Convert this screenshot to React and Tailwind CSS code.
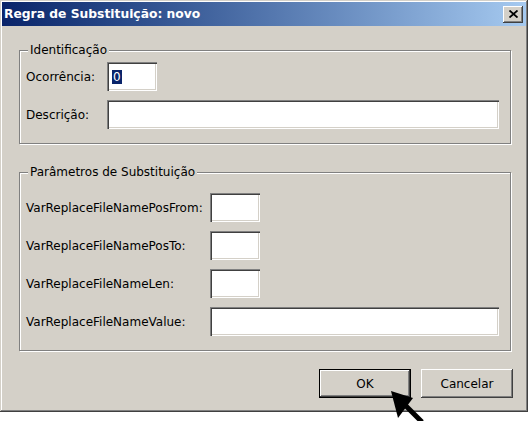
import React from "react";

// Sunken (3D) edit box, Windows classic look
function Field({ width, children }) {
  return (
    <div
      className={`${width} h-[29px] bg-white flex items-center pl-[5px] shadow-[inset_1px_1px_0_#808080,inset_2px_2px_0_#404040,inset_-1px_-1px_0_#ffffff,inset_-2px_-2px_0_#d4d0c8]`}>
      {children}
    </div>
  );
}

function Row({ label, labelWidth, width, children }) {
  return (
    <div className="flex items-center">
      <span className={`${labelWidth} shrink-0`}>{label}</span>
      <Field width={width}>{children}</Field>
    </div>
  );
}

// Etched group box with its caption over the top line
function GroupBox({ title, className, children }) {
  return (
    <div
      className={`relative w-[492px] border border-[#808080] shadow-[inset_1px_1px_0_#ffffff,1px_1px_0_#ffffff] ${className}`}>
      <span className="absolute left-[8px] -top-[8px] px-[2px] bg-[#d4d0c8] leading-[14px]">
        {title}
      </span>
      {children}
    </div>
  );
}

function RaisedButton({ label, isDefault }) {
  const face = (
    <div className="w-full h-full flex items-center justify-center shadow-[inset_-1px_-1px_0_#404040,inset_1px_1px_0_#ffffff,inset_-2px_-2px_0_#808080,inset_2px_2px_0_#d4d0c8]">
      {label}
    </div>
  );
  if (isDefault) {
    return <div className="w-[92px] h-[29px] border border-black">{face}</div>;
  }
  return <div className="w-[92px] h-[29px]">{face}</div>;
}

export default function App() {
  return (
    <div className="relative w-[531px] h-[421px] bg-white font-['DejaVu_Sans',sans-serif] text-[12px] text-black overflow-hidden">
      <div className="w-[528px] h-[412px] bg-[#d4d0c8] p-[2px] flex flex-col shadow-[inset_-1px_-1px_0_#404040,inset_1px_1px_0_#d4d0c8,inset_-2px_-2px_0_#808080,inset_2px_2px_0_#ffffff]">
        {/* Title bar */}
        <div className="h-[24px] flex items-center justify-between pl-[2px] pr-[3px] bg-gradient-to-r from-[#0a246a] to-[#a6caf0]">
          <span className="text-white font-bold text-[12.3px]">
            Regra de Substituição: novo
          </span>
          <div className="w-[20px] h-[17px] flex items-center justify-center shadow-[inset_-1px_-1px_0_#404040,inset_1px_1px_0_#ffffff,inset_-2px_-2px_0_#808080,inset_2px_2px_0_#d4d0c8] bg-[#d4d0c8]">
            <svg width="9" height="8" viewBox="0 0 9 8">
              <path d="M0.5 0.5 L8.5 7.5 M8.5 0.5 L0.5 7.5" stroke="#000" strokeWidth="1.8" />
            </svg>
          </div>
        </div>

        <div className="flex flex-col pl-[17px]">
          <GroupBox title="Identificação" className="mt-[24px] pt-[11px] pb-[14px] pl-[6px] pr-[11px] flex flex-col gap-[9px]">
            <Row label="Ocorrência:" labelWidth="w-[81px]" width="w-[50px]">
              <span className="bg-[#0a246a] text-white px-[1px] leading-[14px]">0</span>
            </Row>
            <Row label="Descrição:" labelWidth="w-[81px]" width="w-[393px]" />
          </GroupBox>

          <GroupBox title="Parâmetros de Substituição" className="mt-[28px] pt-[20px] pb-[14px] pl-[6px] pr-[11px] flex flex-col gap-[9px]">
            <Row label="VarReplaceFileNamePosFrom:" labelWidth="w-[184px]" width="w-[50px]" />
            <Row label="VarReplaceFileNamePosTo:" labelWidth="w-[184px]" width="w-[50px]" />
            <Row label="VarReplaceFileNameLen:" labelWidth="w-[184px]" width="w-[50px]" />
            <Row label="VarReplaceFileNameValue:" labelWidth="w-[184px]" width="w-[290px]" />
          </GroupBox>
        </div>

        <div className="flex justify-end gap-[10px] mt-[18px] pr-[13px]">
          <RaisedButton label="OK" isDefault />
          <RaisedButton label="Cancelar" />
        </div>
      </div>

      {/* Mouse pointer over the OK button */}
      <svg className="absolute left-[386px] top-[386px]" width="40" height="35" viewBox="0 0 40 35">
        <path d="M5 5 L27 12 L12 32 Z" fill="#000" />
        <path d="M17 17 L36 36" stroke="#000" strokeWidth="5" />
      </svg>
    </div>
  );
}
